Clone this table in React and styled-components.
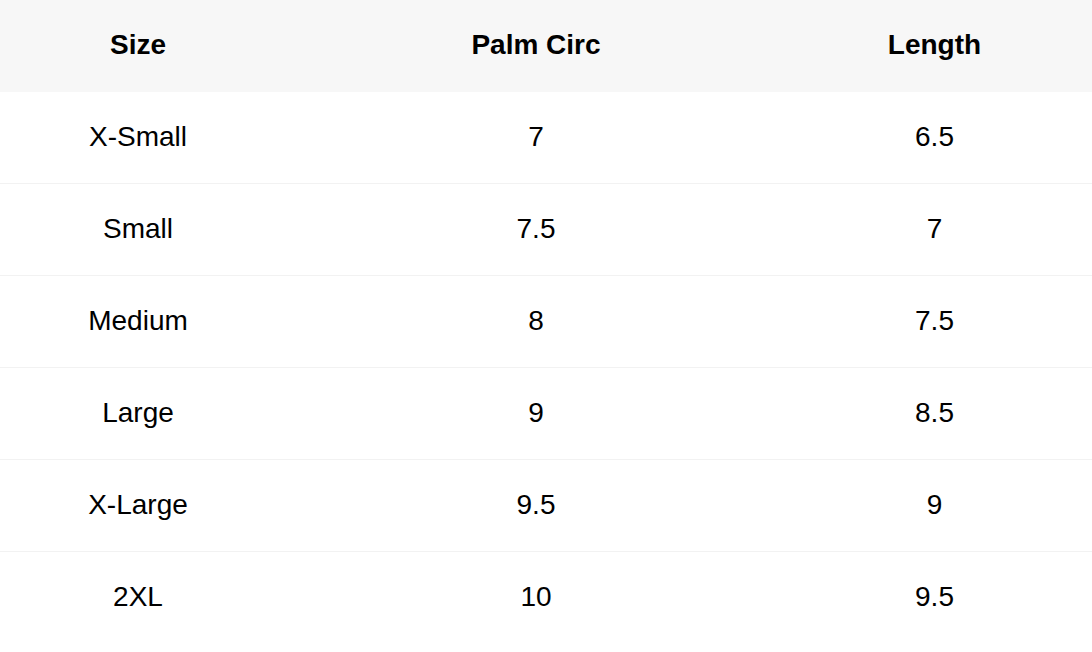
import React from "react";
import styled, { createGlobalStyle } from "styled-components";

const GlobalStyle = createGlobalStyle`
  html, body {
    margin: 0;
    padding: 0;
    background: #fff;
  }
  body {
    font-family: "Liberation Sans", Arial, sans-serif;
    color: #000;
  }
`;

const rows = [
  ["X-Small", "7", "6.5"],
  ["Small", "7.5", "7"],
  ["Medium", "8", "7.5"],
  ["Large", "9", "8.5"],
  ["X-Large", "9.5", "9"],
  ["2XL", "10", "9.5"],
];

const App = () => {
  return (
    <>
      <GlobalStyle />
      <StyledTable>
        <Row header>
          <Cell bold>Size</Cell>
          <Cell bold>Palm Circ</Cell>
          <Cell bold>Length</Cell>
        </Row>
        {rows.map((r, i) => (
          <Row key={r[0]} last={i === rows.length - 1}>
            {r.map((v, j) => (
              <Cell key={j}>{v}</Cell>
            ))}
          </Row>
        ))}
      </StyledTable>
    </>
  );
};

export default App;

const StyledTable = styled.div`
  width: 100%;
  display: flex;
  flex-direction: column;
`;

const Row = styled.div`
  display: grid;
  grid-template-columns: 276px 520px 277px 1fr;
  height: 92px;
  box-sizing: border-box;
  align-items: center;
  background: ${(p) => (p.header ? "#f7f7f7" : "#fff")};
  border-bottom: ${(p) => (p.header || p.last ? "none" : "1px solid #f2f2f2")};
`;

const Cell = styled.div`
  text-align: center;
  font-size: 28px;
  line-height: 1;
  font-weight: ${(p) => (p.bold ? 700 : 400)};
  padding-bottom: 2px;
`;
